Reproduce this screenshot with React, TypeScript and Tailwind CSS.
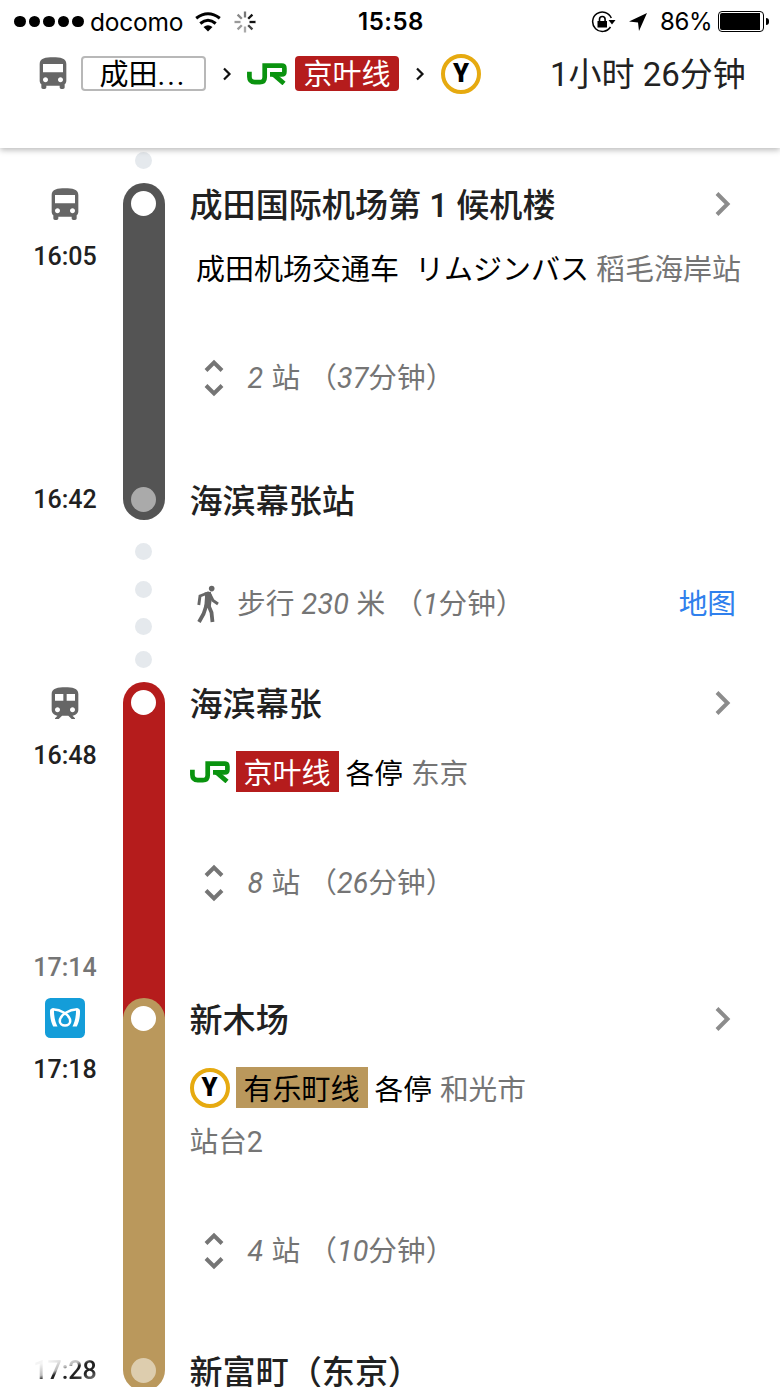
import type { ReactNode } from "react";

function BusIcon() {
  return (
    <svg viewBox="0 0 24 24" className="size-10 shrink-0 fill-[#666]">
      <path d="M4 16c0 .88.39 1.67 1 2.22V20c0 .55.45 1 1 1h1c.55 0 1-.45 1-1v-1h8v1c0 .55.45 1 1 1h1c.55 0 1-.45 1-1v-1.78c.61-.55 1-1.34 1-2.22V6c0-3.5-3.58-4-8-4s-8 .5-8 4v10zm3.5 1c-.83 0-1.5-.67-1.5-1.5S6.67 14 7.500 14s1.500.67 1.500 1.500S8.330 17 7.500 17zm9 0c-.83 0-1.500-.67-1.500-1.500s.67-1.500 1.500-1.500 1.500.67 1.500 1.500-.67 1.500-1.500 1.500zm1.500-6H6V6h12v5z" />
    </svg>
  );
}

function TrainIcon() {
  return (
    <svg viewBox="0 0 24 24" className="size-10 shrink-0 fill-[#666]">
      <path d="M12 2c-4 0-8 .5-8 4v9.5C4 17.430 5.570 19 7.500 19L6 20.500v.5h2.230l2-2H14l2 2h2v-.5L16.500 19c1.930 0 3.500-1.570 3.500-3.500V6c0-3.500-3.580-4-8-4zM7.500 17c-.83 0-1.500-.67-1.500-1.500S6.670 14 7.500 14s1.500.67 1.500 1.500S8.330 17 7.500 17zm3.500-7H6V6h5v4zm2 0V6h5v4h-5zm3.500 7c-.83 0-1.500-.67-1.500-1.500s.67-1.500 1.500-1.500 1.500.67 1.500 1.500-.67 1.500-1.500 1.500z" />
    </svg>
  );
}

function JrLogo() {
  return (
    <svg viewBox="0 0 40 22" className="h-[22px] w-10 shrink-0" fill="none" stroke="#0a930f" strokeWidth="4.7">
      <path d="M2.400 8.800v5q0 5.300 5.400 5.300h5q4.900 0 4.900-4.900V2.600H34.800q2.600 0 2.600 2.600V8.700q0 2.600-2.600 2.600H23" />
      <path d="M26 11L37 20.500" />
    </svg>
  );
}

function MetroLogo() {
  return (
    <svg viewBox="0 0 40 40" className="size-10 shrink-0">
      <rect width="40" height="40" rx="5.500" fill="#149dd9" />
      <g fill="#fff">
        <path d="M5 13C5 11 6.500 10.200 9 10.400C8.700 17 9.800 23 12.500 28.500H8.200C5.800 24 4.800 18 5 13Z" />
        <path d="M35 13C35 11 33.500 10.200 31 10.400C31.300 17 30.200 23 27.500 28.500H31.800C34.200 24 35.200 18 35 13Z" />
      </g>
      <path
        d="M7 11.700C14 10.500 25.200 16.500 25.200 23.300A5.200 4.200 0 0 1 14.800 23.300C14.800 16.500 26 10.500 33 11.700"
        fill="none"
        stroke="#fff"
        strokeWidth="2.500"
      />
    </svg>
  );
}

function YBadge() {
  return (
    <span className="flex size-10 shrink-0 items-center justify-center rounded-full border-[4.500px] border-[#e6aa10] bg-white text-[25.500px] leading-none font-black text-black">
      Y
    </span>
  );
}

function WalkIcon() {
  return (
    <svg viewBox="0 0 24 38" className="h-[38px] w-6 shrink-0" fill="none" stroke="#666">
      <circle cx="15.700" cy="3.600" r="2.800" fill="#666" stroke="none" />
      <path d="M8.500 7.500L14.800 6.800L16 13L14.500 23H8.200L9 12Z" fill="#666" stroke="none" />
      <path d="M13 7.500L4 11L2.800 20" strokeWidth="2.900" />
      <path d="M14 9.500L17 15.500L22 19" strokeWidth="2.900" />
      <path d="M10.500 20L7.500 29L3 37" strokeWidth="3.800" />
      <path d="M12.300 20L15.500 27.500L16.500 37" strokeWidth="3.800" />
    </svg>
  );
}

function Chevron() {
  return (
    <svg viewBox="0 0 18 26" className="h-[26px] w-[18px]" fill="none" stroke="#8c8c8c" strokeWidth="4">
      <path d="M3 2.500L13.500 13L3 23.500" />
    </svg>
  );
}

function SmallChevron() {
  return (
    <svg viewBox="0 0 10 14" className="h-3.5 w-2.5 shrink-0" fill="none" stroke="#111" strokeWidth="2.200">
      <path d="M2 1.500L7.500 7L2 12.500" />
    </svg>
  );
}

function StatusBar() {
  return (
    <div className="flex h-[43px] items-center font-[Inter] text-2xl leading-none text-black">
      <div className="flex w-[358px] items-center pl-[14px]">
        <span className="flex gap-[3px]">
          {[0, 1, 2, 3, 4].map((i) => (
            <span key={i} className="size-[11.600px] rounded-full bg-black" />
          ))}
        </span>
        <span className="ml-[6px] w-[105px] pt-px text-[24.500px] tracking-[-0.200px]">docomo</span>
        <svg viewBox="0 0 26 20" className="h-5 w-[26px]" fill="none" stroke="#000" strokeWidth="3">
          <path d="M1.200 6.300Q13 -2.800 24.800 6.300" />
          <path d="M5.300 11.500Q13 5 20.700 11.500" />
          <path d="M8.500 15Q13 11.500 17.500 15L13 19.500Z" fill="#000" stroke="none" />
        </svg>
        <svg viewBox="-11 -11 22 22" className="ml-[13px] size-[22px]" strokeWidth="2.300">
          <path d="M0-4.500V-10.500" stroke="#777" />
          <path d="M3.200-3.200L7.400-7.400" stroke="#111" />
          <path d="M4.500 0H10.500" stroke="#111" />
          <path d="M3.200 3.200L7.400 7.400" stroke="#444" />
          <path d="M0 4.500V10.500" stroke="#aaa" />
          <path d="M-3.200 3.200L-7.400 7.400" stroke="#999" />
          <path d="M-4.500 0H-10.500" stroke="#999" />
          <path d="M-3.200-3.200L-7.400-7.400" stroke="#888" />
        </svg>
      </div>
      <span className="w-[233px] pt-px font-semibold tracking-[0.500px]">15:58</span>
      <svg viewBox="0 0 25 22" className="h-[22px] w-[25px]" fill="none" stroke="#000">
        <path d="M20.300 7A9.700 9.700 0 1 0 19.500 16" strokeWidth="1.500" />
        <path d="M17.500 9H24.500L21 13.500Z" fill="#000" stroke="none" />
        <rect x="6.500" y="10" width="9.500" height="6.500" fill="#000" stroke="none" />
        <path d="M8.500 10V8.300a2.800 2.800 0 0 1 5.600 0V10" strokeWidth="1.600" />
      </svg>
      <svg viewBox="0 0 18 18" className="ml-[13px] h-[18px] w-[18px]">
        <path d="M18 0L10 18L9 9.500L0 8.500Z" />
      </svg>
      <span className="ml-[13px] w-[58px] pt-px text-[24px] tracking-[-0.400px]">86%</span>
      <span className="flex h-[21px] w-[46px] rounded-[4px] border border-black p-px">
        <span className="w-10 rounded-l-[2px] bg-black" />
      </span>
      <span className="ml-[2px] h-[7px] w-[3px] rounded-r-full bg-black" />
    </div>
  );
}

function RouteSummary() {
  return (
    <div className="flex h-[61px] items-center pl-[33px] text-[29px] leading-[34px] text-black">
      <BusIcon />
      <span className="ml-2 flex h-[35px] w-[125px] items-center justify-center rounded-[4px] border-2 border-[#b8b8b8] pt-[2px]">
        成田<span className="w-[30px] tracking-[2px]">...</span>
      </span>
      <span className="ml-4"><SmallChevron /></span>
      <span className="ml-[15px]"><JrLogo /></span>
      <span className="ml-2 flex h-[35px] w-[104px] items-center justify-center rounded-[4px] bg-[#b51c1c] pt-[2px] text-white">京叶线</span>
      <span className="ml-4"><SmallChevron /></span>
      <span className="ml-4"><YBadge /></span>
      <span className="ml-[69px] pt-[2px] text-[33px] text-[#222]">1小时 26分钟</span>
    </div>
  );
}

function Title({ children, chevron }: { children: ReactNode; chevron?: boolean }) {
  return (
    <div className="flex h-[42px] items-center justify-between pr-[48.500px] text-[33.100px] leading-[42px] font-medium text-[#212121]">
      <span className="pt-1">{children}</span>
      {chevron && <Chevron />}
    </div>
  );
}

function Stops({ count, minutes }: { count: string; minutes: string }) {
  return (
    <div className="flex h-[42px] items-center text-[28.700px] leading-[42px] text-[#757575]">
      <svg viewBox="0 0 20 38" className="mr-[23.500px] ml-[14.500px] h-[38px] w-5" fill="none" stroke="#757575" strokeWidth="4">
        <path d="M2 11.500L10 3.500L18 11.500M2 26.500L10 34.500L18 26.500" />
      </svg>
      <span className="whitespace-pre">
        <i className="inline-block w-[17px]">{count}</i> 站<span className="inline-block w-2" />（<i>{minutes}</i>分钟）
      </span>
    </div>
  );
}

function Time({ children, muted }: { children: ReactNode; muted?: boolean }) {
  return (
    <span className={`h-[30px] w-[62px] text-[25px] leading-[32px] font-medium ${muted ? "text-[#757575]" : "text-[#212121]"}`}>
      {children}
    </span>
  );
}

function Dot() {
  return <span className="size-[17px] shrink-0 rounded-full bg-[#e5e9ed]" />;
}

function Side({ children }: { children?: ReactNode }) {
  return <div className="flex w-[122.500px] shrink-0 flex-col items-center pr-2 pl-[15.500px]">{children}</div>;
}

export default function App() {
  return (
    <div
      lang="zh-CN"
      className="flex h-[1387px] w-[780px] flex-col overflow-hidden bg-white font-[Roboto,'Noto_Sans_CJK_SC',sans-serif]"
    >
      <header className="z-10 h-[148px] shrink-0 bg-white shadow-[0_2px_6px_rgba(0,0,0,0.280)]">
        <StatusBar />
        <RouteSummary />
      </header>

      <div className="flex h-[35px] shrink-0 pt-1 pl-[135px]"><Dot /></div>

      <section className="flex h-[337px] shrink-0">
        <Side>
          <span className="mt-[2px]"><BusIcon /></span>
          <span className="mt-[16px] h-[30px]"><Time>16:05</Time></span>
          <span className="mt-[213px] h-[30px]"><Time>16:42</Time></span>
        </Side>
        <div className="flex w-[42px] shrink-0 flex-col items-center justify-between rounded-full bg-[#545454] py-2">
          <span className="size-[25px] rounded-full bg-white" />
          <span className="size-[25px] rounded-full bg-[#aaa]" />
        </div>
        <div className="flex-1 pl-[25px]">
          <Title chevron>成田国际机场第 1 候机楼</Title>
          <div className="mt-[22px] h-[42px] pl-[6.500px] text-[29px] leading-[46px] whitespace-nowrap text-black">
            <span className="inline-block w-[219px]">成田机场交通车</span>
            <span lang="ja" className="inline-block w-[181px]">リムジンバス</span>
            <span className="text-[#757575]">稻毛海岸站</span>
          </div>
          <div className="mt-[68px]"><Stops count="2" minutes="37" /></div>
          <div className="mt-[80px]"><Title>海滨幕张站</Title></div>
        </div>
      </section>

      <section className="flex h-[162px] shrink-0">
        <Side />
        <div className="flex w-[42px] flex-col items-center pt-[23px]">
          <Dot />
          <span className="h-[20.500px]" />
          <Dot />
          <span className="h-[20.500px]" />
          <Dot />
          <span className="h-4" />
          <Dot />
        </div>
        <div className="flex flex-1 items-start pt-[62px] pr-[44px] pl-[31.500px] text-[28.700px] leading-[44px] text-[#757575]">
          <span className="mt-[3px] mr-[17px] leading-none"><WalkIcon /></span>
          <span className="flex-1 whitespace-pre">步行 <i className="tracking-[0.300px]">230</i> 米<span className="inline-block w-[9px]" />（<i>1</i>分钟）</span>
          <span className="text-[#2f80ed]">地图</span>
        </div>
      </section>

      <section className="flex h-[316px] shrink-0">
        <Side>
          <span className="mt-[2px]"><TrainIcon /></span>
          <span className="mt-[16px] h-[30px]"><Time>16:48</Time></span>
          <span className="mt-[182px] h-[30px]"><Time muted>17:14</Time></span>
        </Side>
        <div className="-mb-[22px] flex w-[42px] shrink-0 flex-col items-center rounded-t-full bg-[#b51c1c] py-2">
          <span className="size-[25px] rounded-full bg-white" />
        </div>
        <div className="flex-1 pl-[25px]">
          <Title chevron>海滨幕张</Title>
          <div className="mt-[27px] flex h-[41px] items-center text-[28.700px] leading-[41px] text-black">
            <JrLogo />
            <span className="mr-[7px] ml-[6px] h-[41px] w-[103px] bg-[#b51c1c] text-center text-[29px] leading-[47px] text-white">京叶线</span>
            <span className="pt-1.5">各停</span><span className="ml-2 pt-1.5 text-[#757575]">东京</span>
          </div>
          <div className="mt-[70px]"><Stops count="8" minutes="26" /></div>
        </div>
      </section>

      <section className="z-[1] flex h-[393px] shrink-0">
        <Side>
          <MetroLogo />
          <span className="mt-[16px] h-[30px]"><Time>17:18</Time></span>
          <span className="mt-[271px] h-[30px] bg-[linear-gradient(160deg,#f4f4f4_22%,#bbb_44%,#222_52%,#222_70%,#888_90%)] bg-clip-text text-[25px] leading-[32px] font-medium text-transparent">17:28</span>
        </Side>
        <div className="flex w-[42px] shrink-0 flex-col items-center justify-between rounded-full bg-[#ba985c] py-2">
          <span className="size-[25px] rounded-full bg-white" />
          <span className="size-[25px] rounded-full bg-[#ddcdae]" />
        </div>
        <div className="flex-1 pl-[25px]">
          <Title chevron>新木场</Title>
          <div className="mt-[27px] flex h-[41px] items-center text-[28.700px] leading-[41px] text-black">
            <YBadge />
            <span className="mr-[7px] ml-[6px] h-[41px] w-[132px] bg-[#ba985c] text-center text-[29px] leading-[47px]">有乐町线</span>
            <span className="pt-1.5">各停</span><span className="ml-2 pt-1.5 text-[#757575]">和光市</span>
          </div>
          <div className="mt-[13px] h-[42px] text-[28.700px] leading-[42px] text-[#757575]">站台2</div>
          <div className="mt-[67px]"><Stops count="4" minutes="10" /></div>
          <div className="mt-[78px]"><Title>新富町（东京）</Title></div>
        </div>
      </section>
    </div>
  );
}
